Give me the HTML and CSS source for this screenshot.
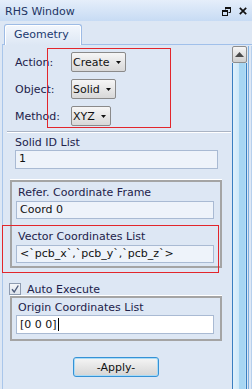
FILE: index.html
```html
<!DOCTYPE html>
<html lang="en">
<head>
    <meta charset="UTF-8">
    <title>RHS Window</title>
    <link rel="stylesheet" href="styles.css">
</head>
<body>
    <div class="window">
        <div class="titlebar">
            <span class="title">RHS Window</span>
            <div class="controls">
                <svg width="9" height="9" viewBox="0 0 9 9">
                    <path d="M3.5 0.5h5v5h-2M3.5 0.5v2" fill="none" stroke="#111" stroke-width="1"/>
                    <rect x="3" y="0" width="6" height="2" fill="#111"/>
                    <rect x="0.5" y="3.5" width="5" height="5" fill="none" stroke="#111" stroke-width="1"/>
                    <rect x="0" y="3" width="6" height="2" fill="#111"/>
                </svg>
                <svg width="8" height="8" viewBox="0 0 8 8">
                    <path d="M0.8 0.8L7.2 7.2M7.2 0.8L0.8 7.2" stroke="#111" stroke-width="1.7"/>
                </svg>
            </div>
        </div>

        <div class="tabs">
            <div class="tab">Geometry</div>
        </div>

        <div class="panel">
            <div class="content">
                <div class="rows">
                    <div class="field-row">
                        <span class="row-label">Action:</span>
                        <div class="select">Create
                            <svg width="5" height="3" viewBox="0 0 5 3"><path d="M0 0h5L2.5 3z" fill="#111"/></svg>
                        </div>
                    </div>
                    <div class="field-row">
                        <span class="row-label">Object:</span>
                        <div class="select">Solid
                            <svg width="5" height="3" viewBox="0 0 5 3"><path d="M0 0h5L2.5 3z" fill="#111"/></svg>
                        </div>
                    </div>
                    <div class="field-row">
                        <span class="row-label">Method:</span>
                        <div class="select">XYZ
                            <svg width="5" height="3" viewBox="0 0 5 3"><path d="M0 0h5L2.5 3z" fill="#111"/></svg>
                        </div>
                    </div>
                </div>

                <div class="sep"></div>

                <div class="field-label">Solid ID List</div>
                <div class="input wide">1</div>

                <div class="group">
                    <div class="field-label">Refer. Coordinate Frame</div>
                    <div class="input">Coord 0</div>
                    <div class="field-label spaced">Vector Coordinates List</div>
                    <div class="input">&lt;`pcb_x`,`pcb_y`,`pcb_z`&gt;</div>
                </div>

                <div class="check-row">
                    <span class="checkbox">
                        <svg width="10" height="10" viewBox="0 0 10 10"><path d="M2 5.2L4.2 8L8.3 1.5" fill="none" stroke="#4f5d7c" stroke-width="1.4"/></svg>
                    </span>
                    <span>Auto Execute</span>
                </div>

                <div class="group group-origin">
                    <div class="field-label">Origin Coordinates List</div>
                    <div class="input white">[0 0 0]<span class="caret"></span></div>
                </div>

                <div class="actions">
                    <button class="apply">-Apply-</button>
                </div>
            </div>

            <div class="scrollbar">
                <div class="scroll-col">
                    <div class="scroll-up">
                        <svg width="9" height="5" viewBox="0 0 9 5"><path d="M0 5h9L4.5 0z" fill="#4a4a4a"/></svg>
                    </div>
                    <div class="scroll-thumb"></div>
                </div>
                <div class="scroll-rail"></div>
            </div>
        </div>

        <!-- review markers -->
        <div class="mark mark-a"></div>
        <div class="mark mark-b"></div>
    </div>
</body>
</html>
```

FILE: styles.css
```css
* {
    margin: 0;
    padding: 0;
    box-sizing: border-box;
}

body {
    width: 252px;
    height: 389px;
    overflow: hidden;
    background: #dde7f4;
    font-family: "DejaVu Sans", sans-serif;
    font-size: 11px;
    color: #22224a;
}

.window {
    position: relative;
    height: 389px;
}

.titlebar {
    height: 21px;
    display: flex;
    align-items: center;
    justify-content: space-between;
    padding: 1px 5px 0 5px;
    background: linear-gradient(#e5eefa, #c7dbf4);
    color: #1e3564;
}

.controls {
    display: flex;
    align-items: center;
    gap: 8px;
}

.controls svg {
    display: block;
}

.tabs {
    height: 23px;
    padding: 3px 0 0 4px;
}

.tab {
    position: relative;
    z-index: 1;
    width: 78px;
    height: 21px;
    line-height: 19px;
    padding-left: 9px;
    border: 1px solid #9dbbe5;
    border-bottom: none;
    border-radius: 3px 3px 0 0;
    background: linear-gradient(#f3f7fd, #dde7f4);
    box-shadow: inset 1px 1px 0 #fff, inset -1px 0 0 #fff;
    color: #1b3a70;
}

.panel {
    display: flex;
    height: 345px;
    margin-left: 2px;
    border-top: 1px solid #a0c0ea;
    border-left: 1px solid #a9c6ea;
}

.content {
    flex: 1;
    padding: 7px 0 0 12px;
}

.rows {
    display: flex;
    flex-direction: column;
    gap: 7px;
}

.field-row {
    display: flex;
    align-items: center;
    height: 20px;
}

.row-label {
    width: 56px;
}

.select {
    display: inline-flex;
    align-items: center;
    gap: 6px;
    height: 20px;
    padding: 0 4px 0 1px;
    border: 1px solid #8a8a8a;
    border-radius: 2px;
    background: linear-gradient(#f6f6f6, #d8d8d8);
    color: #111;
}

.select svg {
    display: block;
}

.sep {
    margin: 5px 1px 0 -8px;
    border-top: 1px solid #aab4c4;
    border-bottom: 1px solid #fff;
}

.field-label {
    height: 14px;
    line-height: 14px;
    margin-top: 3px;
}

.input {
    height: 18px;
    line-height: 16px;
    padding-left: 3px;
    margin-top: 1px;
    border: 1px solid #a9bad3;
    background: #eef3fa;
    color: #111;
    white-space: nowrap;
}

.input.wide {
    height: 19px;
    margin: 0 14px 0 0;
}

.input.white {
    height: 19px;
    line-height: 17px;
    background: #fff;
    display: flex;
    align-items: center;
}

.caret {
    display: inline-block;
    width: 1px;
    height: 13px;
    margin-left: 1px;
    background: #000;
}

.group {
    margin: 11px 10px 0 -5px;
    padding: 0 6px 3px 4px;
    border: 2px solid #a4a4a4;
    box-shadow: 0 -1px 0 #fff;
}

.group .field-label {
    margin-top: 4px;
    padding-left: 2px;
}

.group .field-label.spaced {
    margin-top: 11px;
}

.group-origin {
    margin-top: 0;
    padding-bottom: 5px;
}

.group-origin .field-label {
    margin-top: 3px;
}

.group-origin .input {
    margin-top: 0;
}

.check-row {
    display: flex;
    align-items: center;
    gap: 6px;
    height: 28px;
    padding-top: 14px;
    margin-left: -6px;
}

.checkbox {
    display: flex;
    align-items: center;
    justify-content: center;
    width: 12px;
    height: 12px;
    border: 1px solid #8e9bb0;
    background: linear-gradient(#f4f6f9, #dde3ec);
}

.actions {
    padding: 16px 0 0 58px;
}

.apply {
    width: 86px;
    height: 20px;
    border: 1px solid #3592d6;
    border-radius: 3px;
    background: linear-gradient(#f5f5f5, #d5d5d5);
    box-shadow: inset 0 0 0 1px #a9dbf6;
    font-family: "DejaVu Sans", sans-serif;
    font-size: 11px;
    color: #111;
}

.scrollbar {
    display: flex;
    width: 20px;
    padding-top: 1px;
}

.scroll-col {
    width: 15px;
    display: flex;
    flex-direction: column;
}

.scroll-up {
    height: 17px;
    display: flex;
    align-items: center;
    justify-content: center;
    border: 1px solid #8d8d8d;
    border-radius: 2px;
    background: linear-gradient(#f6f6f6, #cfcfcf);
}

.scroll-up svg {
    display: block;
}

.scroll-thumb {
    flex: 1;
    border-left: 1px solid #3b7fc0;
    border-right: 1px solid #3b7fc0;
    background: linear-gradient(to right, #e0f1fc 0, #cfe9f9 45%, #a7d6f3 50%, #a7d6f3 92%, #c6e5f8 100%);
}

.scroll-rail {
    flex: 1;
    background: linear-gradient(to right, transparent 1px, #7fb0e0 1px, #7fb0e0 2px, transparent 2px, transparent 4px, #b6d0ee 4px);
}

.mark {
    position: absolute;
    border: 1px solid #e2262c;
}

.mark-a {
    left: 47px;
    top: 48px;
    width: 124px;
    height: 80px;
}

.mark-b {
    left: 2px;
    top: 225px;
    width: 217px;
    height: 48px;
}
```
